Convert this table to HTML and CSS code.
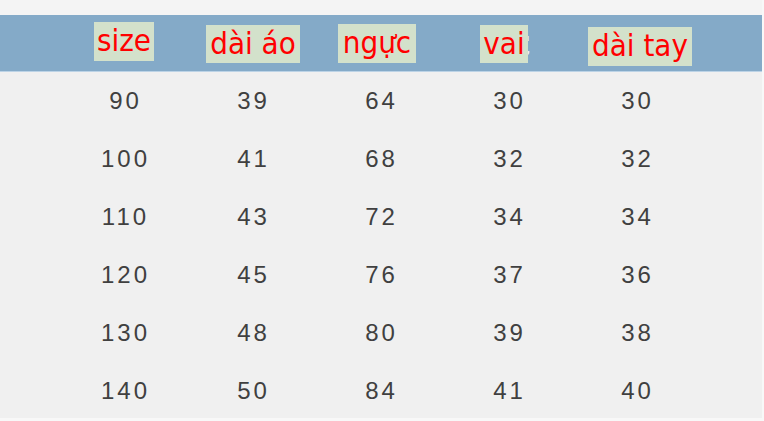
FILE: index.html
```html
<!DOCTYPE html>
<html lang="vi">
<head>
<meta charset="utf-8">
<title>Bảng size</title>
<link rel="stylesheet" href="styles.css">
</head>
<body>
<div class="page">
  <div class="header">
    <div class="hcell"><span class="zh">尺码</span><span class="tag tag-size">size</span></div>
    <div class="hcell"><span class="zh">衣长</span><span class="tag tag-length">dài áo</span></div>
    <div class="hcell"><span class="zh">胸围</span><span class="tag tag-chest">ngực</span></div>
    <div class="hcell"><span class="zh">肩宽</span><span class="tag tag-shoulder">vai</span></div>
    <div class="hcell"><span class="zh">袖长</span><span class="tag tag-sleeve">dài tay</span></div>
  </div>
  <div class="rows">
    <div class="row"><span>90</span><span>39</span><span>64</span><span>30</span><span>30</span></div>
    <div class="row"><span>100</span><span>41</span><span>68</span><span>32</span><span>32</span></div>
    <div class="row"><span>110</span><span>43</span><span>72</span><span>34</span><span>34</span></div>
    <div class="row"><span>120</span><span>45</span><span>76</span><span>37</span><span>36</span></div>
    <div class="row"><span>130</span><span>48</span><span>80</span><span>39</span><span>38</span></div>
    <div class="row"><span>140</span><span>50</span><span>84</span><span>41</span><span>40</span></div>
  </div>
</div>
</body>
</html>
```
FILE: styles.css
```css
html, body {
  margin: 0;
  padding: 0;
  background: #f8f8f8;
}
.page {
  width: 762px;
  height: 418px;
  padding-top: 15px;
  box-sizing: border-box;
  background: #f4f4f4;
  overflow: hidden;
}
.header {
  display: flex;
  height: 56px;
  padding-left: 60px;
  background: #84aac8;
  border-bottom: 1px solid #bcd3e6;
}
.hcell {
  position: relative;
  width: 128px;
  display: flex;
  align-items: center;
  justify-content: center;
}
.zh {
  font-family: "Noto Sans CJK SC", sans-serif;
  font-size: 22px;
  font-weight: 700;
  color: rgba(255, 255, 255, 0.85);
  margin-top: 0px;
}
.tag {
  position: absolute;
  height: 39px;
  display: flex;
  align-items: center;
  justify-content: center;
  background: #d3e1cb;
  color: #ff0000;
  font-family: "DejaVu Sans Condensed", "DejaVu Sans", sans-serif;
  font-stretch: condensed;
  font-size: 31px;
  line-height: 1;
  padding-bottom: 2px;
  box-sizing: border-box;
}
.tag-size { left: 34px; top: 7px; width: 60px; }
.tag-length { left: 18px; top: 10px; width: 94px; height: 38px; }
.tag-chest { left: 22px; top: 9px; width: 78px; }
.tag-shoulder { left: 36px; top: 10px; width: 48px; height: 38px; }
.tag-sleeve { left: 16px; top: 12px; width: 104px; }
.rows {
  background: #f0f0f0;
  height: 346px;
}
.row {
  display: grid;
  grid-template-columns: repeat(5, 128px);
  padding-left: 60px;
  height: 58px;
  align-items: center;
  justify-items: center;
}
.row span {
  font-family: "Liberation Sans", Arial, sans-serif;
  font-size: 24px;
  letter-spacing: 3px;
  margin-right: -3px;
  color: #404040;
}
```
